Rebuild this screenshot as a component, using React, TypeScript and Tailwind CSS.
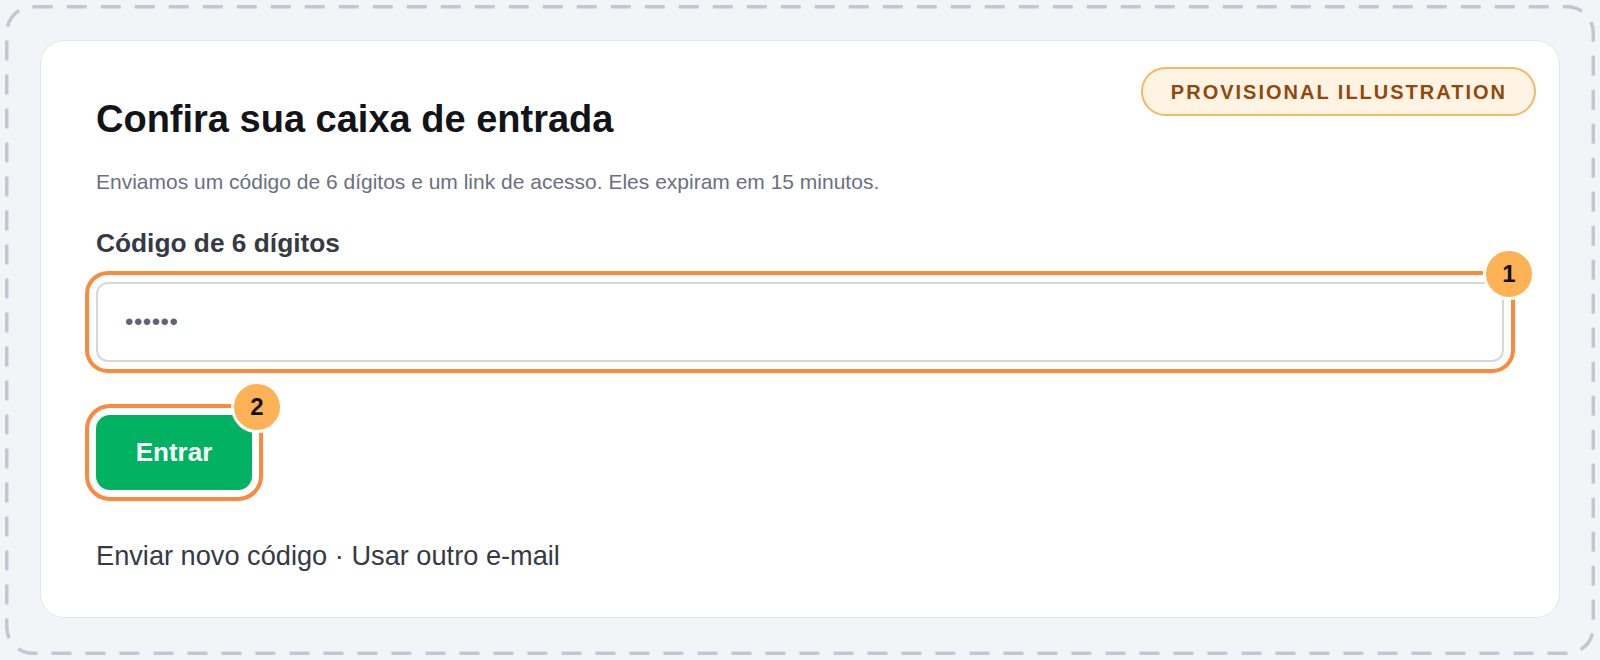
import React from 'react';

const Marker = ({ n }: { n: string }) => (
  <span className="absolute right-[-31px] top-[-34px] flex h-[52px] w-[52px] items-center justify-center rounded-full border-[3px] border-white bg-[#fdb256] text-[24px] font-bold leading-none text-[#111111]">
    {n}
  </span>
);

const App = () => {
  return (
    <div className="h-[660px] w-full bg-[#f3f4f8] p-[5px] font-['Liberation_Sans',Arial,sans-serif]">
      <div className="relative h-full p-[35px]">
        {/* dashed frame */}
        <svg className="pointer-events-none absolute inset-0" width="1590" height="650" viewBox="0 0 1590 650" fill="none">
          <rect x="1.75" y="1.75" width="1586.5" height="646.5" rx="26" stroke="#c3c7d1" strokeWidth="3.5" strokeDasharray="20 14" />
        </svg>

        {/* card */}
        <div className="relative rounded-[24px] border border-[#e3e5ea] bg-white pb-[42px] pl-[55px] pr-[55px] pt-[56px]">
          <span className="absolute right-[23px] top-[26px] flex h-[49px] items-center rounded-full border-2 border-[#f5b95f] bg-[#fff4e3] pl-[28px] pr-[27px] text-[20px] font-bold tracking-[0.1em] text-[#94470c]">
            PROVISIONAL ILLUSTRATION
          </span>

          <h1 className="text-[38px] font-bold leading-[44px] text-[#131419]">
            Confira sua caixa de entrada
          </h1>
          <p className="mt-[26px] text-[21px] leading-[30px] text-[#6b7080]">
            Enviamos um código de 6 dígitos e um link de acesso. Eles expiram em 15 minutos.
          </p>

          <label className="mt-[29px] block text-[26.3px] font-bold leading-[34px] text-[#353a45]">
            Código de 6 dígitos
          </label>
          <div className="relative mt-[22px] rounded-[12px] outline-4 outline-offset-[7px] outline-[#fb8a3e]">
            <div className="flex h-[80px] items-center rounded-[12px] border-2 border-[#d4d8de] bg-white pl-[27px]">
              <span className="text-[24px] leading-none tracking-[0.5px] text-[#5f6373]">••••••</span>
            </div>
            <Marker n="1" />
          </div>

          <div className="mt-[53px] flex">
            <div className="relative rounded-[14px] outline-4 outline-offset-[7px] outline-[#fb8a3e]">
              <button className="flex h-[75px] w-[156px] items-center justify-center rounded-[14px] bg-[#00b262] text-[26px] font-bold text-white">
                Entrar
              </button>
              <Marker n="2" />
            </div>
          </div>

          <div className="mt-[47px] text-[27.2px] leading-[38px] text-[#353a45]">
            Enviar novo código · Usar outro e-mail
          </div>
        </div>
      </div>
    </div>
  );
};

export default App;
